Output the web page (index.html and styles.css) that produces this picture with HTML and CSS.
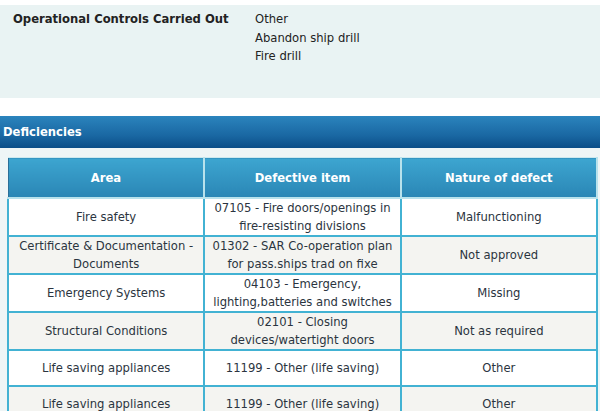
FILE: index.html
```html
<!DOCTYPE html>
<html>
<head>
<meta charset="utf-8">
<link rel="stylesheet" href="styles.css">
</head>
<body>
<div class="info">
  <div class="info-label">Operational Controls Carried Out</div>
  <div class="info-values">
    <div>Other</div>
    <div>Abandon ship drill</div>
    <div>Fire drill</div>
  </div>
</div>
<div class="section-title">Deficiencies</div>
<div class="section-body">
  <table class="def-table">
    <thead>
      <tr><th>Area</th><th>Defective item</th><th>Nature of defect</th></tr>
    </thead>
    <tbody>
      <tr><td>Fire safety</td><td>07105 - Fire doors/openings in fire-resisting divisions</td><td>Malfunctioning</td></tr>
      <tr class="alt"><td>Certificate &amp; Documentation - Documents</td><td>01302 - SAR Co-operation plan for pass.ships trad on fixe</td><td>Not approved</td></tr>
      <tr><td>Emergency Systems</td><td>04103 - Emergency, lighting,batteries and switches</td><td>Missing</td></tr>
      <tr class="alt"><td>Structural Conditions</td><td>02101 - Closing devices/watertight doors</td><td>Not as required</td></tr>
      <tr class="single"><td>Life saving appliances</td><td>11199 - Other (life saving)</td><td>Other</td></tr>
      <tr class="alt single"><td>Life saving appliances</td><td>11199 - Other (life saving)</td><td>Other</td></tr>
    </tbody>
  </table>
</div>
</body>
</html>
```
FILE: styles.css
```css
html, body {
  margin: 0;
  padding: 0;
  background: #ffffff;
}
body {
  font-family: "DejaVu Sans", Verdana, sans-serif;
  font-size: 11.6px;
  color: #222;
}
.info {
  margin-top: 5px;
  height: 93px;
  box-sizing: border-box;
  background: #e9f3f3;
  padding: 5px 13px;
  display: grid;
  grid-template-columns: 242px auto;
  line-height: 18.5px;
}
.info-label {
  font-weight: bold;
  color: #222;
}
.section-title {
  margin-top: 18px;
  height: 32px;
  line-height: 33px;
  padding-left: 3px;
  color: #fff;
  font-weight: bold;
  background: linear-gradient(#2b84bd, #1a68a3 60%, #0b4e88);
}
.section-body {
  background: #eef5f6;
  padding: 9px 0 0 7px;
}
.def-table {
  width: 591px;
  border-collapse: collapse;
  table-layout: fixed;
}
.def-table th {
  height: 39px;
  color: #fff;
  font-weight: bold;
  background: linear-gradient(#3da5d0, #2a86b5);
  border: 2px solid #b8e2ec;
  border-top: 1px solid #cde9ef;
  text-align: center;
  padding: 0;
}
.def-table th:first-child {
  border-left: 1px solid #2a6f98;
}
.def-table td {
  height: 36px;
  border: 2px solid #42b2d3;
  background: #fff;
  color: #2b3440;
  text-align: center;
  line-height: 18px;
  padding: 0 4px;
}
.def-table tr.single td {
  height: 34px;
}
.def-table tr.alt td {
  background: #f4f4f1;
}
```
